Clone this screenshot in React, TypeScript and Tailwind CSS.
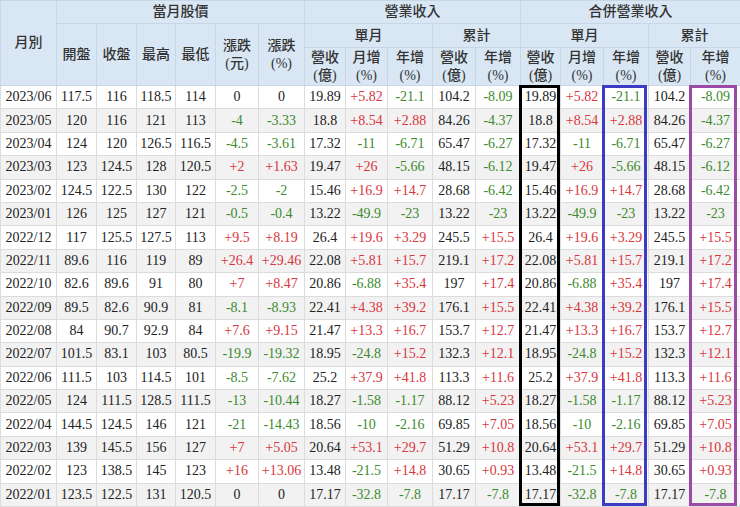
import React from "react";

const raw = `2023/06 117.5 116 118.5 114 0 0 19.89 +5.82 -21.1 104.2 -8.09
2023/05 120 116 121 113 -4 -3.33 18.8 +8.54 +2.88 84.26 -4.37
2023/04 124 120 126.5 116.5 -4.5 -3.61 17.32 -11 -6.71 65.47 -6.27
2023/03 123 124.5 128 120.5 +2 +1.63 19.47 +26 -5.66 48.15 -6.12
2023/02 124.5 122.5 130 122 -2.5 -2 15.46 +16.9 +14.7 28.68 -6.42
2023/01 126 125 127 121 -0.5 -0.4 13.22 -49.9 -23 13.22 -23
2022/12 117 125.5 127.5 113 +9.5 +8.19 26.4 +19.6 +3.29 245.5 +15.5
2022/11 89.6 116 119 89 +26.4 +29.46 22.08 +5.81 +15.7 219.1 +17.2
2022/10 82.6 89.6 91 80 +7 +8.47 20.86 -6.88 +35.4 197 +17.4
2022/09 89.5 82.6 90.9 81 -8.1 -8.93 22.41 +4.38 +39.2 176.1 +15.5
2022/08 84 90.7 92.9 84 +7.6 +9.15 21.47 +13.3 +16.7 153.7 +12.7
2022/07 101.5 83.1 103 80.5 -19.9 -19.32 18.95 -24.8 +15.2 132.3 +12.1
2022/06 111.5 103 114.5 101 -8.5 -7.62 25.2 +37.9 +41.8 113.3 +11.6
2022/05 124 111.5 128.5 111.5 -13 -10.44 18.27 -1.58 -1.17 88.12 +5.23
2022/04 144.5 124.5 146 121 -21 -14.43 18.56 -10 -2.16 69.85 +7.05
2022/03 139 145.5 156 127 +7 +5.05 20.64 +53.1 +29.7 51.29 +10.8
2022/02 123 138.5 145 123 +16 +13.06 13.48 -21.5 +14.8 30.65 +0.93
2022/01 123.5 122.5 131 120.5 0 0 17.17 -32.8 -7.8 17.17 -7.8`;

const rows = raw.split("\n").map((l) => {
  const p = l.trim().split(/\s+/);
  return [...p, p[7], p[8], p[9], p[10], p[11]];
});

const widths = [56, 40, 40, 39, 40, 43, 46, 41, 42, 45, 43, 45, 40, 43, 45, 42, 50];
const colored = new Set([5, 6, 8, 9, 11, 13, 14, 16]);

function cls(v: string, i: number) {
  if (!colored.has(i)) return "text-[#222]";
  if (v.startsWith("+")) return "text-[#d9363e]";
  if (v.startsWith("-")) return "text-[#3c8a2e]";
  return "text-[#222]";
}

const th = "border border-[#c9d6e3] bg-[#d9e7f4] text-[#333] font-medium text-center p-0 leading-[18px] text-[14px]";

export default function App() {
  return (
    <div className="relative w-[740px] h-[507px] overflow-hidden bg-white" style={{ fontFamily: '"Liberation Serif", "Noto Sans CJK TC", serif' }}>
      <table className="table-fixed border-collapse w-[740px] text-[14px]">
        <colgroup>
          {widths.map((w, i) => (
            <col key={i} style={{ width: w }} />
          ))}
        </colgroup>
        <thead>
          <tr className="h-[23px]">
            <th rowSpan={3} className={th}>月別</th>
            <th colSpan={6} className={th}>當月股價</th>
            <th colSpan={5} className={th}>營業收入</th>
            <th colSpan={5} className={th}>合併營業收入</th>
          </tr>
          <tr className="h-[24px]">
            <th rowSpan={2} className={th}>開盤</th>
            <th rowSpan={2} className={th}>收盤</th>
            <th rowSpan={2} className={th}>最高</th>
            <th rowSpan={2} className={th}>最低</th>
            <th rowSpan={2} className={th}>漲跌<br />(元)</th>
            <th rowSpan={2} className={th}>漲跌<br />(%)</th>
            <th colSpan={3} className={th}>單月</th>
            <th colSpan={2} className={th}>累計</th>
            <th colSpan={3} className={th}>單月</th>
            <th colSpan={2} className={th}>累計</th>
          </tr>
          <tr className="h-[38px]">
            {["營收<(億)", "月增<(%)", "年增<(%)", "營收<(億)", "年增<(%)", "營收<(億)", "月增<(%)", "年增<(%)", "營收<(億)", "年增<(%)"].map((s, i) => {
              const [a, b] = s.split("<");
              return (
                <th key={i} className={th}>
                  {a}
                  <br />
                  {b}
                </th>
              );
            })}
          </tr>
        </thead>
        <tbody>
          {rows.map((r, ri) => (
            <tr key={ri} className={`h-[23.4px] ${ri % 2 ? "bg-[#f2f2f2]" : "bg-white"}`}>
              {r.map((v, i) => (
                <td key={i} className={`border border-[#dcdcdc] text-center p-0 leading-[22px] whitespace-nowrap ${cls(v, i)}`}>
                  {v}
                </td>
              ))}
            </tr>
          ))}
        </tbody>
      </table>
      <div className="absolute left-[519px] top-[85px] w-[41px] h-[421px] border-[3px] border-black" />
      <div className="absolute left-[602px] top-[85px] w-[45px] h-[421px] border-[3px] border-[#3b3bc4]" />
      <div className="absolute left-[689px] top-[85px] w-[48px] h-[421px] border-[3px] border-[#9b4aa8]" />
    </div>
  );
}
